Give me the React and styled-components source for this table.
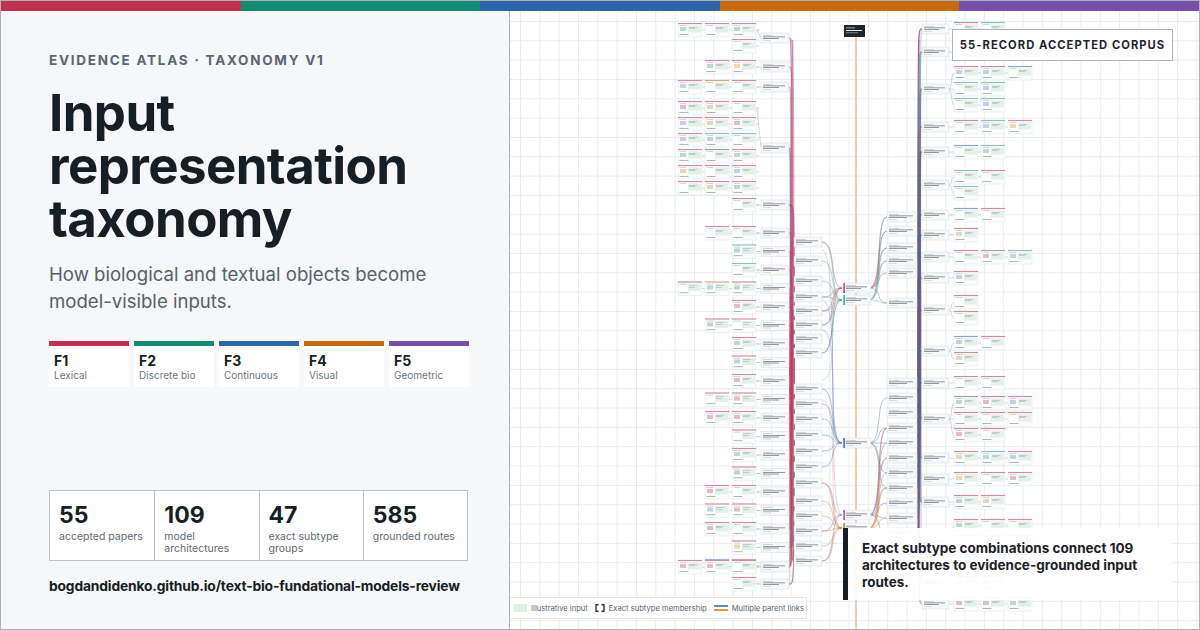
import React from 'react';
import styled, { createGlobalStyle } from 'styled-components';

const GlobalStyle = createGlobalStyle`
  html, body { margin: 0; padding: 0; background: #ffffff; }
  body { font-family: Inter, "Noto Sans", "Liberation Sans", sans-serif; }
  * { box-sizing: border-box; }
`;

const C = {
  red: '#c0314f',
  green: '#138a72',
  teal: '#2aa08b',
  blue: '#2e64a8',
  orange: '#c7690e',
  purple: '#7650a8',
  ink: '#161e26',
  muted: '#5b6670',
};

const FAMILIES = [
  { id: 'F1', name: 'Lexical', color: C.red },
  { id: 'F2', name: 'Discrete bio', color: C.green },
  { id: 'F3', name: 'Continuous', color: C.blue },
  { id: 'F4', name: 'Visual', color: C.orange },
  { id: 'F5', name: 'Geometric', color: C.purple },
];

const STATS = [
  { value: '55', label: 'accepted papers' },
  { value: '109', label: 'model architectures' },
  { value: '47', label: 'exact subtype groups' },
  { value: '585', label: 'grounded routes' },
];

const Frame = styled.div`
  width: 1200px;
  height: 630px;
  border: 1px solid #aab3bc;
  display: flex;
  flex-direction: column;
  overflow: hidden;
`;

const Stripe = styled.div`
  display: flex;
  height: 10px;
  flex: none;
`;

const StripeSeg = styled.div`
  flex: 1;
  background: ${p => p.color};
`;

const Body = styled.div`
  flex: 1;
  display: flex;
  min-height: 0;
`;

const Left = styled.section`
  width: 509px;
  flex: none;
  background: #f5f7f9;
  border-right: 1px solid #aab3bc;
  padding: 41px 0 0 48px;
  display: flex;
  flex-direction: column;
`;

const Eyebrow = styled.div`
  font-size: 13.5px;
  font-weight: 700;
  letter-spacing: 1.75px;
  color: ${C.muted};
  line-height: 17px;
  white-space: nowrap;
`;

const Title = styled.h1`
  margin: 17px 0 0;
  font-size: 51px;
  font-weight: 700;
  letter-spacing: -0.6px;
  color: ${C.ink};
`;

const TitleLine = styled.span`
  display: block;
  height: 53px;
  line-height: 53px;
`;

const Subtitle = styled.p`
  margin: 16px 0 0;
  width: 390px;
  font-size: 18.6px;
  line-height: 27px;
  color: #56616b;
`;

const Families = styled.div`
  margin-top: 26px;
  display: flex;
  gap: 5px;
`;

const Family = styled.div`
  width: 80px;
  height: 46px;
  background: #ffffff;
  border-top: 5px solid ${p => p.color};
  padding: 6px 0 0 5px;
`;

const FamId = styled.div`
  font-size: 14px;
  font-weight: 700;
  color: ${C.ink};
  line-height: 17px;
`;

const FamName = styled.div`
  font-size: 10px;
  line-height: 12px;
  color: #6b757e;
`;

const Stats = styled.div`
  margin-top: 103px;
  width: 419px;
  height: 71px;
  display: grid;
  grid-template-columns: repeat(4, 1fr);
  background: #ffffff;
  border: 1px solid #b9c2ca;
`;

const Stat = styled.div`
  padding: 10px 0 0 9px;
  & + & { border-left: 1px solid #b9c2ca; }
`;

const StatValue = styled.div`
  font-size: 23px;
  font-weight: 700;
  color: ${C.ink};
  line-height: 28px;
`;

const StatLabel = styled.div`
  font-size: 10.5px;
  line-height: 11.5px;
  color: #606a73;
  width: 84px;
  margin-top: 2px;
`;

const Link = styled.div`
  margin-top: 17px;
  font-size: 13.8px;
  font-weight: 700;
  color: ${C.ink};
  letter-spacing: -0.15px;
  white-space: nowrap;
`;

const Canvas = styled.section`
  position: relative;
  flex: 1;
  background-color: #ffffff;
  background-image:
    linear-gradient(to right, #e7ebf0 1px, transparent 1px),
    linear-gradient(to bottom, #e7ebf0 1px, transparent 1px);
  background-size: 19.33px 19.33px;
  background-position: 10px 10px;
  overflow: hidden;
`;

const Diagram = styled.svg`
  position: absolute;
  inset: 0;
  width: 100%;
  height: 100%;
  filter: blur(0.3px);
`;

const Badge = styled.div`
  position: absolute;
  top: 18px;
  right: 26px;
  width: 221px;
  height: 32px;
  background: #ffffff;
  border: 1px solid #a9b2bb;
  display: flex;
  align-items: center;
  justify-content: center;
  font-size: 11.2px;
  font-weight: 700;
  letter-spacing: 1.05px;
  color: #1c232b;
  white-space: nowrap;
`;

const Callout = styled.div`
  position: absolute;
  right: 27px;
  bottom: 29px;
  width: 329px;
  height: 72px;
  background: rgba(255, 255, 255, 0.93);
  border-left: 5px solid #161e26;
  padding: 12px 10px 0 14px;
  font-size: 13.5px;
  line-height: 17px;
  font-weight: 700;
  color: #1a2129;
`;

const Legend = styled.div`
  position: absolute;
  left: 0;
  bottom: 10px;
  width: 297px;
  height: 22px;
  background: rgba(255, 255, 255, 0.95);
  border: 1px solid #e1e6eb;
  border-left: none;
  display: flex;
  align-items: center;
  gap: 7px;
  padding-left: 4px;
  font-size: 7.6px;
  color: #57616b;
  white-space: nowrap;
`;

const LegendItem = styled.span`
  display: flex;
  align-items: center;
  gap: 4px;
`;

const Swatch = styled.span`
  width: 13px;
  height: 8px;
  background: #dff0e6;
`;

// deterministic random so the diagram stays put between runs
function makeRand(seed) {
  let s = seed;
  return () => {
    s = (s * 16807) % 2147483647;
    return (s - 1) / 2147483646;
  };
}

function Card({ x, y, accent, thumb }) {
  return (
    <g>
      <rect x={x} y={y} width={24} height={14} fill="#fbfcfc" stroke="#dde2e7" strokeWidth={0.5} />
      <rect x={x} y={y} width={24} height={1.1} fill={accent} opacity={0.55} />
      <rect x={x + 10} y={y + 2.5} width={13} height={7} fill="#e3f1e8" />
      <rect x={x + 11} y={y + 4} width={8} height={0.5} fill="#9ea7ae" />
      <rect x={x + 11} y={y + 5.5} width={6} height={0.5} fill="#9ea7ae" />
      <rect x={x + 1.5} y={y + 2.3} width={7} height={0.5} fill="#a9b1b8" />
      {thumb && <rect x={x + 2} y={y + 4} width={6} height={4} fill={thumb} opacity={0.4} />}
      <rect x={x + 1.5} y={y + 11} width={9} height={0.6} fill="#7c868f" />
    </g>
  );
}

function Node({ x, y, w = 28, accent }) {
  return (
    <g>
      <rect x={x} y={y} width={w} height={10} fill="#f6f8f9" stroke="#d3d9de" strokeWidth={0.5} />
      {accent && <rect x={x - 0.6} y={y} width={1.4} height={10} fill={accent} />}
      <rect x={x + 2} y={y + 2} width={10} height={0.45} fill="#a0a9b0" />
      <rect x={x + 2} y={y + 3.6} width={w - 6} height={0.6} fill="#4f5963" />
      <rect x={x + 2} y={y + 5.2} width={w - 12} height={0.6} fill="#4f5963" />
      <rect x={x + 2} y={y + 7.3} width={8} height={0.4} fill="#a9b1b8" />
    </g>
  );
}

function buildDiagram() {
  const r = makeRand(42);
  const pick = arr => arr[Math.floor(r() * arr.length)];
  const thumbs = ['#6f8fd0', '#d9a04b', '#c25a7a', '#59a68f', null, null, null];
  const cards = [];
  const nodes = [];
  const edges = [];

  // left groups: rows of cards feeding a group node
  const leftNodes = [];
  const leftGroups = [
    { y: 23, rows: [[679, 706, 733], [733]] },
    { y: 60, rows: [[706, 733]] },
    { y: 80, rows: [[679, 706, 733]] },
    { y: 101, rows: [[679, 706, 733], [679, 706, 733], [679, 706, 733], [679, 706, 733], [679, 706, 733], [679, 706, 733]] },
    { y: 198, rows: [[733]] },
  ];
  for (let y = 226; y < 560; y += 18.5) {
    const cols = [733];
    if (r() < 0.3) cols.unshift(706);
    if (y > 265 && y < 300) cols.unshift(679, 706);
    leftGroups.push({ y, rows: [cols] });
  }
  leftGroups.push({ y: 560, rows: [[679, 706, 733]] });
  leftGroups.push({ y: 577, rows: [[733]] });
  leftGroups.forEach(g => {
    g.rows.forEach((cols, ri) => {
      [...new Set(cols)].forEach(x => {
        const cy = g.y + ri * 16;
        cards.push({ x, y: cy, accent: r() < 0.85 ? C.red : pick([C.blue, C.teal, C.orange]), thumb: pick(thumbs) });
        edges.push({ d: `M${x + 24},${cy + 7} L${x + 27},${cy + 7}`, c: '#8c959d', w: 0.4 });
      });
    });
    const ny = g.y + Math.max(0, (g.rows.length - 1) * 8) + 2;
    nodes.push({ x: 762, y: ny });
    leftNodes.push(ny + 5);
    edges.push({ d: `M758,${g.y + 7} L762,${ny + 5}`, c: '#8c959d', w: 0.4 });
  });

  // middle columns
  const m1 = [237, 256, 276, 292, 306, 320, 334, 348, 384, 399, 414, 430, 446, 462, 478, 496, 511, 526, 541, 556];
  const center = [
    { y: 283, c: C.red },
    { y: 295, c: C.teal },
    { y: 438, c: C.blue },
    { y: 510, c: C.purple },
    { y: 523, c: C.orange },
  ];
  const m2 = [212, 226, 243, 256, 268, 298, 378, 393, 408, 423, 438, 453, 468, 483, 498, 513, 528];

  // left bundle into m1
  leftNodes.forEach(ly => {
    const n = 2 + Math.floor(r() * 3);
    for (let k = 0; k < n; k++) {
      const ty = pick(m1) + 5;
      const bx = 790.5 + r() * 5;
      const col = ty > 380 && r() < 0.45 ? pick([C.blue, C.purple, C.blue, C.orange]) : pick([C.red, C.red, C.red, '#d9607a']);
      edges.push({ d: `M790,${ly} C${bx},${ly} ${bx},${ly} ${bx},${(ly + ty) / 2} S${bx},${ty} 795,${ty}`, c: col, w: 0.6, o: 0.6 });
    }
  });

  // m1 -> center
  m1.forEach(y => {
    const targets = y < 360 ? [0, 1] : y < 470 ? [2] : [3, 4];
    targets.forEach(t => {
      if (r() < 0.25 && targets.length > 1) return;
      const ty = center[t].y + 5;
      edges.push({ d: `M823,${y + 5} C838,${y + 5} 830,${ty} 843,${ty}`, c: center[t].c, w: 0.6, o: 0.65 });
    });
    nodes.push({ x: 795, y, w: 28 });
  });
  [[300, 2], [330, 2], [250, 3], [400, 4], [380, 1]].forEach(([y, t]) => {
    const ty = center[t].y + 5;
    edges.push({ d: `M823,${y} C842,${y} 826,${ty} 843,${ty}`, c: center[t].c, w: 0.5, o: 0.5 });
  });

  // center -> m2
  center.forEach((cn, ci) => {
    const set = ci < 2 ? m2.slice(0, 6) : ci === 2 ? m2.slice(6, 14) : m2.slice(9);
    set.forEach(y => {
      if (r() < 0.3) return;
      edges.push({ d: `M870,${cn.y + 5} C884,${cn.y + 5} 876,${y + 5} 888,${y + 5}`, c: cn.c, w: 0.6, o: 0.65 });
    });
  });

  // right groups
  const rightNodes = [];
  const rightGroups = [];
  let y = 22;
  while (y < 600) {
    const rowCount = r() < 0.2 ? 2 + Math.floor(r() * 2) : 1;
    const rows = [];
    for (let k = 0; k < rowCount; k++) {
      const n = 1 + Math.floor(r() * 3);
      rows.push([955, 982, 1009].slice(0, n));
    }
    rightGroups.push({ y, rows });
    y += rowCount * 16 + 4 + Math.floor(r() * 6);
  }
  rightGroups.forEach(g => {
    const ny = g.y + (g.rows.length - 1) * 8 + 2;
    nodes.push({ x: 923, y: ny, w: 27 });
    rightNodes.push(ny + 5);
    g.rows.forEach((cols, ri) => {
      cols.forEach(x => {
        const cy = g.y + ri * 16;
        cards.push({ x, y: cy, accent: r() < 0.7 ? C.red : pick([C.blue, C.teal, C.purple]), thumb: pick(thumbs) });
      });
      edges.push({ d: `M950,${ny + 5} C953,${ny + 5} 952,${g.y + ri * 16 + 7} 955,${g.y + ri * 16 + 7}`, c: '#8c959d', w: 0.4 });
      for (let k = 1; k < cols.length; k++) {
        const x = cols[k];
        edges.push({ d: `M${x - 3},${g.y + ri * 16 + 7} L${x},${g.y + ri * 16 + 7}`, c: '#8c959d', w: 0.4 });
      }
    });
  });

  // m2 -> right bundle
  m2.forEach(my => {
    nodes.push({ x: 888, y: my, w: 30 });
    const n = 3 + Math.floor(r() * 4);
    for (let k = 0; k < n; k++) {
      const ty = pick(rightNodes);
      const bx = 918.5 + r() * 3.5;
      const col = my > 370 && r() < 0.5 ? pick([C.blue, C.blue, C.orange, C.teal, C.purple]) : pick([C.red, C.red, '#d9607a', C.teal]);
      edges.push({ d: `M918,${my + 5} C${bx},${my + 5} ${bx},${my + 5} ${bx},${(my + ty) / 2} S${bx},${ty} 923,${ty}`, c: col, w: 0.6, o: 0.6 });
    }
  });

  return { cards, nodes, edges, center };
}

const DIAGRAM = buildDiagram();

function EvidenceGraph() {
  const { cards, nodes, edges, center } = DIAGRAM;
  return (
    <Diagram viewBox="511 11 688 618" preserveAspectRatio="xMinYMin meet">
      <line x1={857} y1={36} x2={857} y2={630} stroke="#f1cba9" strokeWidth={2} />
      <line x1={793.5} y1={40} x2={793.5} y2={560} stroke={C.red} strokeWidth={1.6} opacity={0.45} />
      <line x1={920} y1={40} x2={920} y2={600} stroke={C.red} strokeWidth={1.6} opacity={0.4} />
      {edges.map((e, i) => (
        <path key={i} d={e.d} fill="none" stroke={e.c} strokeWidth={e.w} opacity={e.o || 1} />
      ))}
      {cards.map((c, i) => <Card key={i} {...c} />)}
      {nodes.map((n, i) => <Node key={i} {...n} />)}
      {center.map((n, i) => <Node key={i} x={845} y={n.y} w={27} accent={n.c} />)}
      <rect x={845} y={25} width={21} height={12} fill="#1e252c" />
      <rect x={847} y={27.5} width={9} height={0.8} fill="#c8ced4" />
      <rect x={847} y={30} width={16} height={0.9} fill="#ffffff" />
      <rect x={847} y={32.5} width={12} height={0.7} fill="#aeb6bd" />
    </Diagram>
  );
}

function BracketIcon() {
  return (
    <svg width="10" height="8" viewBox="0 0 10 8">
      <path d="M3.5 0.8H1V7.2H3.5M6.5 0.8H9V7.2H6.5" fill="none" stroke="#2a323a" strokeWidth="1.4" />
    </svg>
  );
}

function ParentLinksIcon() {
  return (
    <svg width="14" height="8" viewBox="0 0 14 8">
      <line x1="0" y1="2" x2="14" y2="2" stroke={C.blue} strokeWidth="1.5" />
      <line x1="0" y1="6" x2="14" y2="6" stroke="#d9701a" strokeWidth="1.5" />
    </svg>
  );
}

export default function App() {
  return (
    <>
      <GlobalStyle />
      <Frame>
        <Stripe>
          {FAMILIES.map(f => <StripeSeg key={f.id} color={f.color} />)}
        </Stripe>
        <Body>
          <Left>
            <Eyebrow>EVIDENCE ATLAS · TAXONOMY V1</Eyebrow>
            <Title>
              <TitleLine>Input</TitleLine>
              <TitleLine>representation</TitleLine>
              <TitleLine>taxonomy</TitleLine>
            </Title>
            <Subtitle>How biological and textual objects become model-visible inputs.</Subtitle>
            <Families>
              {FAMILIES.map(f => (
                <Family key={f.id} color={f.color}>
                  <FamId>{f.id}</FamId>
                  <FamName>{f.name}</FamName>
                </Family>
              ))}
            </Families>
            <Stats>
              {STATS.map(s => (
                <Stat key={s.value}>
                  <StatValue>{s.value}</StatValue>
                  <StatLabel>{s.label}</StatLabel>
                </Stat>
              ))}
            </Stats>
            <Link>bogdandidenko.github.io/text-bio-fundational-models-review</Link>
          </Left>
          <Canvas>
            <EvidenceGraph />
            <Badge>55-RECORD ACCEPTED CORPUS</Badge>
            <Callout>Exact subtype combinations connect 109 architectures to evidence-grounded input routes.</Callout>
            <Legend>
              <LegendItem><Swatch />Illustrative input</LegendItem>
              <LegendItem><BracketIcon />Exact subtype membership</LegendItem>
              <LegendItem><ParentLinksIcon />Multiple parent links</LegendItem>
            </Legend>
          </Canvas>
        </Body>
      </Frame>
    </>
  );
}
